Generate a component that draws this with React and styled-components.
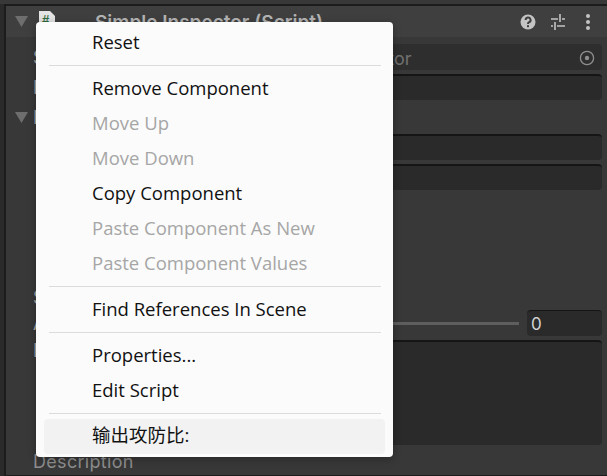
import React from 'react';
import styled, { createGlobalStyle } from 'styled-components';

const Global = createGlobalStyle`
  html, body { margin: 0; padding: 0; width: 607px; height: 476px; overflow: hidden; background: #383838; }
`;

const Page = styled.div`
  position: relative;
  width: 607px;
  height: 476px;
  overflow: hidden;
  box-sizing: border-box;
  padding-left: 4px;
  background: #2a2a2a;
  font-family: "Inter", "Liberation Sans", sans-serif;
`;
const TopStrip = styled.div`
  height: 4px;
  margin-left: -4px;
  background: #383838;
`;
const Inspector = styled.div`
  height: 472px;
  background: #383838;
  border-top: 2px solid #1c1c1c;
  border-left: 2px solid #1c1c1c;
  border-bottom: 1px solid #1c1c1c;
  box-sizing: border-box;
  display: flex;
  flex-direction: column;
`;
const Header = styled.div`
  height: 31px;
  flex: none;
  background: #3f3f3f;
  display: flex;
  align-items: center;
  padding: 0 11px 0 9px;
  color: #b4b4b4;
  font-weight: 600;
  font-size: 19px;
`;
const Fold = styled.svg`
  width: 13px;
  height: 11px;
  flex: none;
`;
const ScriptIcon = styled.svg`
  width: 18px;
  height: 22px;
  margin-left: 10px;
  flex: none;
`;
const Title = styled.span`
  margin-left: 39px;
  flex: 1;
  white-space: nowrap;
  position: relative;
  top: 1px;
`;
const HeadIcons = styled.div`
  display: flex;
  align-items: center;
  gap: 14px;
  margin-top: 1px;
`;
const HeadIcon = styled.svg`
  width: 16px;
  height: 18px;
  display: block;
`;
const Body = styled.div`
  display: flex;
  flex-direction: column;
  padding: 7px 5px 0 27px;
  color: #a9a9a9;
  font-size: 18px;
`;
const Row = styled.div`
  display: flex;
  align-items: center;
  height: 26px;
  margin-top: ${p => p.$mt || 0}px;
  margin-left: ${p => p.$ml || 0}px;
`;
const Label = styled.span`
  width: ${p => p.$w || 240}px;
  flex: none;
  white-space: nowrap;
  opacity: 0.99;
`;
const Field = styled.div`
  flex: 1;
  height: ${p => p.$h || 26}px;
  box-sizing: border-box;
  background: ${p => (p.$object ? '#2e2e2e' : '#2a2a2a')};
  border-top: 2px solid ${p => (p.$object ? '#2e2e2e' : '#151515')};
  border-radius: 4px;
  display: flex;
  align-items: center;
  justify-content: space-between;
  color: #707070;
  padding: 0 7px 0 1px;
`;
const Picker = styled.svg`
  width: 16px;
  height: 16px;
  flex: none;
`;
const SliderTrack = styled.div`
  flex: 1;
  height: 3px;
  background: #5e5e5e;
  margin-right: 8px;
`;
const NumberBox = styled(Field)`
  flex: none;
  width: 75px;
  color: #d2d2d2;
  padding-left: 4px;
  border-top-width: 1px;
  border-top-color: #151515;
  font-size: 17px;
`;
const AreaRow = styled.div`
  display: flex;
  margin-top: 4px;
`;
const DescRow = styled.div`
  margin-top: 6px;
  color: #8e8e8e;
  font-size: 18px;
  height: 24px;
  letter-spacing: 0.3px;
`;

const Menu = styled.div`
  position: absolute;
  left: 36px;
  top: 22px;
  width: 357px;
  height: 435px;
  box-sizing: border-box;
  padding: 3px 8px 0;
  background: #fbfbfb;
  border-radius: 4px;
  box-shadow: 0 2px 8px rgba(0, 0, 0, 0.3);
  font-family: "Open Sans", "Noto Sans CJK SC", sans-serif;
  font-size: 18.5px;
  display: flex;
  flex-direction: column;
`;
const Item = styled.div`
  height: 35px;
  flex: none;
  box-sizing: border-box;
  display: flex;
  align-items: center;
  padding: 0 0 ${p => (p.$active ? 5 : 2)}px 48px;
  color: ${p => (p.$disabled ? '#a6a6a6' : '#111111')};
  background: ${p => (p.$active ? '#f2f2f2' : 'transparent')};
  border-radius: ${p => (p.$active ? '4px' : '0')};
  white-space: nowrap;
`;
const Separator = styled.div`
  height: 1px;
  flex: none;
  background: #dcdcdc;
  margin: 5px 4px 5px 5px;
`;

const Triangle = ({ color = '#6e6e6e' }) => (
  <Fold viewBox="0 0 13 11"><path d="M0 0H13L6.5 11Z" fill={color} /></Fold>
);

const menu = [
  { t: 'Reset' }, 's',
  { t: 'Remove Component' },
  { t: 'Move Up', d: 1 },
  { t: 'Move Down', d: 1 },
  { t: 'Copy Component' },
  { t: 'Paste Component As New', d: 1 },
  { t: 'Paste Component Values', d: 1 }, 's',
  { t: 'Find References In Scene' }, 's',
  { t: 'Properties...' },
  { t: 'Edit Script' }, 's',
  { t: '输出攻防比:', a: 1 },
];

export default function App() {
  return (
    <Page>
      <Global />
      <TopStrip />
      <Inspector>
        <Header>
          <Triangle />
          <ScriptIcon viewBox="0 0 18 22">
            <path d="M1 0H12L17 5V22H1Z" fill="#e4e4e4" />
            <text x="4" y="13" fontSize="13" fontWeight="700" fill="#2f6b3f" fontFamily="Liberation Sans">#</text>
          </ScriptIcon>
          <Title>Simple Inspector (Script)</Title>
          <HeadIcons>
            <HeadIcon viewBox="0 0 16 18">
              <circle cx="8" cy="9" r="7.5" fill="#c4c4c4" />
              <path d="M5.6 7a2.5 2.5 0 1 1 3.6 2.2c-.8.4-1.2.8-1.2 1.8" fill="none" stroke="#3f3f3f" strokeWidth="2" />
              <rect x="7" y="12.2" width="2" height="2" fill="#3f3f3f" />
            </HeadIcon>
            <HeadIcon viewBox="0 0 16 18">
              <path d="M1 6H8M12 6H15M10 1V9M1 13H3M7 13H15M5 9V17" stroke="#c4c4c4" strokeWidth="1.6" fill="none" />
            </HeadIcon>
            <HeadIcon viewBox="0 0 16 18">
              <circle cx="8" cy="3" r="2" fill="#c4c4c4" />
              <circle cx="8" cy="9" r="2" fill="#c4c4c4" />
              <circle cx="8" cy="15" r="2" fill="#c4c4c4" />
            </HeadIcon>
          </HeadIcons>
        </Header>
        <Body>
          <Row>
            <Label>Script</Label>
            <Field $object>
              <span>SimpleInspector</span>
              <Picker viewBox="0 0 16 16">
                <circle cx="8" cy="8" r="6.6" fill="none" stroke="#8e8e8e" strokeWidth="1.3" />
                <circle cx="8" cy="8" r="2.2" fill="#8e8e8e" />
              </Picker>
            </Field>
          </Row>
          <Row $mt={4}>
            <Label>Name</Label>
            <Field />
          </Row>
          <Row $mt={4} $ml={-18}>
            <Triangle />
            <Label $w={245}>&nbsp;Info</Label>
          </Row>
          <Row $mt={4}>
            <Label />
            <Field />
          </Row>
          <Row $mt={4}>
            <Label />
            <Field />
          </Row>
          <Row $mt={94}>
            <Label>Stats</Label>
          </Row>
          <Row>
            <Label>Attack</Label>
            <SliderTrack />
            <NumberBox>0</NumberBox>
          </Row>
          <AreaRow>
            <Label>Info</Label>
            <Field $h={105} />
          </AreaRow>
          <DescRow>Description</DescRow>
        </Body>
      </Inspector>
      <Menu>
        {menu.map((m, i) =>
          m === 's' ? (
            <Separator key={i} />
          ) : (
            <Item key={i} $disabled={m.d} $active={m.a}>{m.t}</Item>
          )
        )}
      </Menu>
    </Page>
  );
}
